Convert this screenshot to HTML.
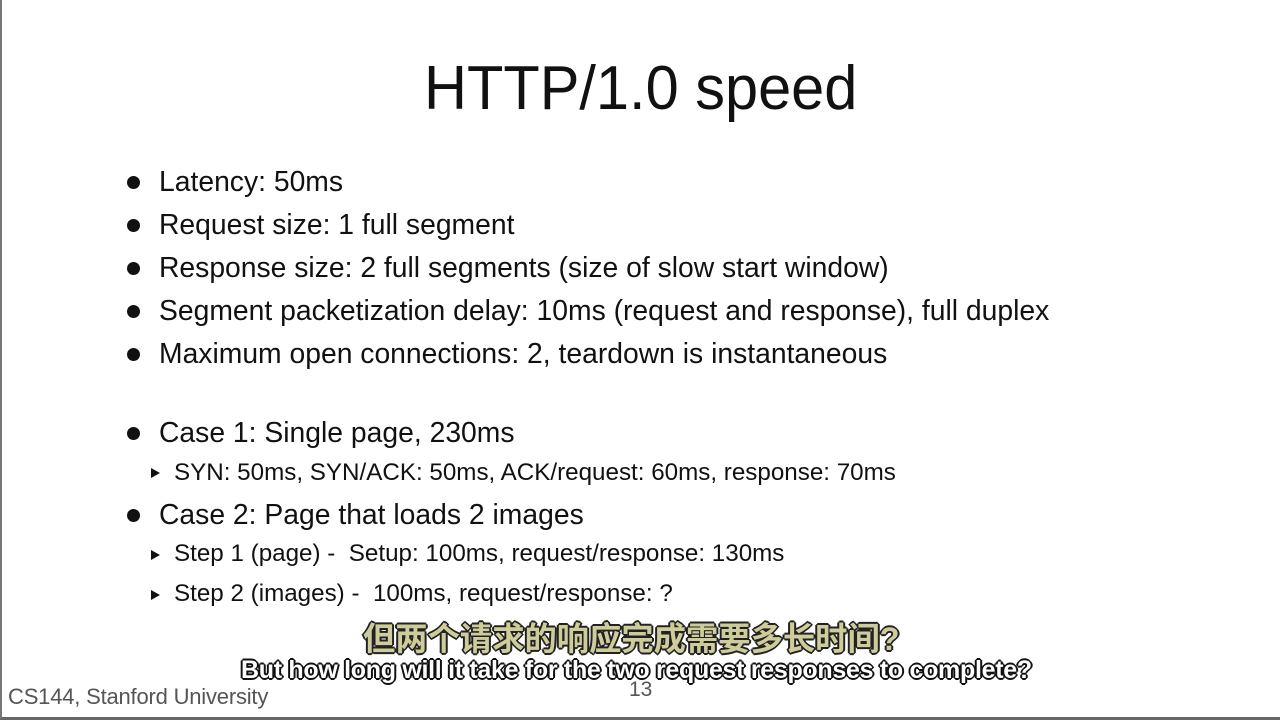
<!DOCTYPE html>
<html><head><meta charset="utf-8"><style>
body{margin:0;width:1280px;height:720px;background:#fff;position:relative;overflow:hidden;font-family:"Liberation Sans","Noto Sans CJK SC",sans-serif;color:#111}
.b{position:absolute;left:0;top:0;width:1278px;height:717px;border-left:2px solid #777;border-bottom:3px solid #666}
.t{position:absolute;white-space:nowrap}
.dot{position:absolute;width:13px;height:13px;border-radius:50%;background:#111}
.tri{position:absolute;width:0;height:0;border-left:9px solid #111;border-top:5px solid transparent;border-bottom:5px solid transparent}
.l1{font-size:28.3px;left:159px}
.l2{font-size:24.2px;left:174px}
</style></head><body>
<div class="b"></div>
<div class="t" style="left:424px;top:53px;font-size:62px;transform:scaleX(0.96);transform-origin:left">HTTP/1.0 speed</div>

<div class="dot" style="left:127px;top:176px"></div><div class="t l1" style="top:165px">Latency: 50ms</div>
<div class="dot" style="left:127px;top:219px"></div><div class="t l1" style="top:208px">Request size: 1 full segment</div>
<div class="dot" style="left:127px;top:262px"></div><div class="t l1" style="top:251px">Response size: 2 full segments (size of slow start window)</div>
<div class="dot" style="left:127px;top:305px"></div><div class="t l1" style="top:294px">Segment packetization delay: 10ms (request and response), full duplex</div>
<div class="dot" style="left:127px;top:348px"></div><div class="t l1" style="top:337px">Maximum open connections: 2, teardown is instantaneous</div>

<div class="dot" style="left:127px;top:427px"></div><div class="t l1" style="top:416px">Case 1: Single page, 230ms</div>
<div class="tri" style="left:151px;top:468px"></div><div class="t l2" style="top:459px">SYN: 50ms, SYN/ACK: 50ms, ACK/request: 60ms, response: 70ms</div>
<div class="dot" style="left:127px;top:509px"></div><div class="t l1" style="top:498px">Case 2: Page that loads 2 images</div>
<div class="tri" style="left:151px;top:550px"></div><div class="t l2" style="top:540px">Step 1 (page) -&nbsp; Setup: 100ms, request/response: 130ms</div>
<div class="tri" style="left:151px;top:590px"></div><div class="t l2" style="top:580px">Step 2 (images) -&nbsp; 100ms, request/response: ?</div>

<div class="t" style="left:363px;top:614px;font-size:32.3px;font-weight:bold;color:#cfcc9c;text-shadow:-2px 0 #222,2px 0 #222,0 -2px #222,0 2px #222,1px 1px #222,-1px -1px #222,1px -1px #222,-1px 1px #222">但两个请求的响应完成需要多长时间?</div>
<div class="t" style="left:241px;top:656px;font-size:25px;font-weight:bold;color:#fff;letter-spacing:-0.3px;text-shadow:-2px 0 #111,2px 0 #111,0 -2px #111,0 2px #111,1px 1px #111,-1px -1px #111,1px -1px #111,-1px 1px #111">But how long will it take for the two request responses to complete?</div>
<div class="t" style="left:8px;top:684px;font-size:22px;color:#555;letter-spacing:-0.2px">CS144, Stanford University</div>
<div class="t" style="left:629px;top:678px;font-size:21px;color:#555">13</div>
</body></html>
